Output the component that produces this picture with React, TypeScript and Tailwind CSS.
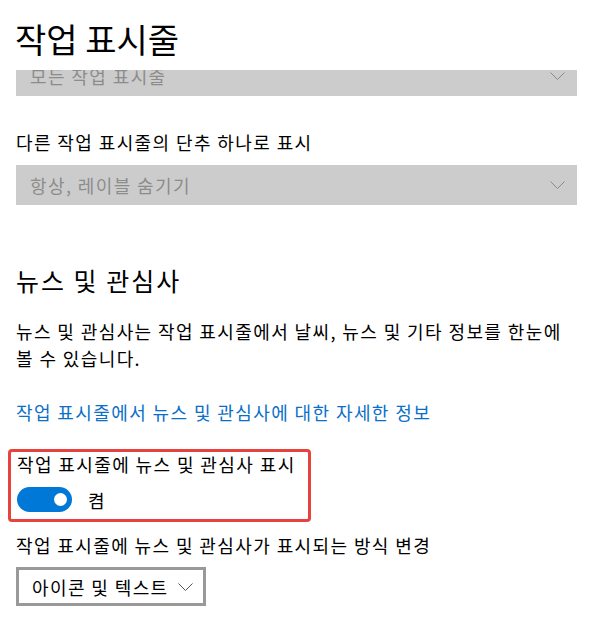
import React from 'react';

const font = "font-['Noto_Sans_CJK_KR','Noto_Sans',sans-serif]";
const body = 'text-[18px] leading-[24px] tracking-[1.4px]';

function Chevron({ color = '#7a7a7a' }: { color?: string }) {
    return (
        <svg width="15" height="8" viewBox="0 0 15 8" fill="none">
            <polyline points="0.5,0.5 7.5,7.5 14.5,0.5" stroke={color} strokeWidth="1" />
        </svg>
    );
}

function DisabledSelect({ value }: { value: string }) {
    return (
        <div className="h-[40px] bg-[#cccccc] flex items-center justify-between pl-[14px] pr-[12px]">
            <span className={`${body} text-[#8c8c8c]`}>{value}</span>
            <Chevron color="#8a8a8a" />
        </div>
    );
}

export default function App() {
    return (
        <div className={`w-[590px] h-[628px] bg-white overflow-hidden flex flex-col text-black ${font}`}>
            <header className="h-[70px] shrink-0 px-[15px] pt-[19px]">
                <h1 className="text-[34px] leading-[40px] font-normal">작업 표시줄</h1>
            </header>

            {/* scrolled settings page */}
            <div className="flex-1 overflow-hidden">
                <div className="-mt-[14px] pl-4 pr-[13px]">
                    <DisabledSelect value="모든 작업 표시줄" />

                    <p className={`mt-[34px] ${body}`}>다른 작업 표시줄의 단추 하나로 표시</p>
                    <div className="mt-[11px]">
                        <DisabledSelect value="항상, 레이블 숨기기" />
                    </div>

                    <h2 className="mt-[60px] text-[25px] leading-[30px] tracking-[2px] font-normal">뉴스 및 관심사</h2>

                    <p className={`mt-[23px] w-[550px] ${body} leading-[27px] break-keep`}>
                        뉴스 및 관심사는 작업 표시줄에서 날씨, 뉴스 및 기타 정보를 한눈에 볼 수 있습니다.
                    </p>

                    <a className={`block mt-[28px] ${body} text-[#0a6fc9]`}>
                        작업 표시줄에서 뉴스 및 관심사에 대한 자세한 정보
                    </a>

                    <div className="mt-[25px] -ml-2 w-[303px] border-[3px] border-[#e8423f] rounded-[4px] pl-[6px] pb-[7px]">
                        <p className={body}>작업 표시줄에 뉴스 및 관심사 표시</p>
                        <div className="mt-[11px] flex items-center gap-4">
                            <div className="w-[55px] h-[25px] rounded-full bg-[#0078d7] flex items-center justify-end pr-[5px]">
                                <div className="w-[13px] h-[13px] rounded-full bg-white" />
                            </div>
                            <span className={body}>켬</span>
                        </div>
                    </div>

                    <p className={`mt-[11px] ${body}`}>작업 표시줄에 뉴스 및 관심사가 표시되는 방식 변경</p>
                    <div className="mt-[10px] w-[190px] h-[39px] border-[3px] border-[#999999] flex items-center justify-between pl-[13px] pr-[10px]">
                        <span className={body}>아이콘 및 텍스트</span>
                        <Chevron color="#555555" />
                    </div>
                </div>
            </div>
        </div>
    );
}
